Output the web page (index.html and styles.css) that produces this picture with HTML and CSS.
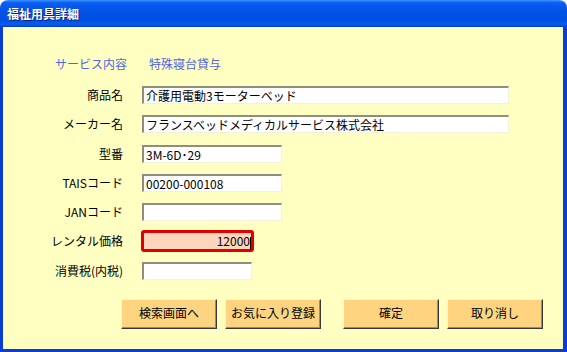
FILE: index.html
```html
<!DOCTYPE html>
<html>
	<head>
		<meta charset="utf-8">
		<title>福祉用具詳細</title>
		<link rel="stylesheet" href="styles.css">
	</head>
	<body>
		<div class="window">
			<div class="title-bar">
				<span class="title">福祉用具詳細</span>
			</div>
			<div class="window-body">
				<div class="service">
					<span class="service-label">サービス内容</span>
					<span class="service-value">特殊寝台貸与</span>
				</div>
				<div class="form">
					<label>商品名</label>
					<div class="field wide">介護用電動3モーターベッド</div>
					<label>メーカー名</label>
					<div class="field wide">フランスベッドメディカルサービス株式会社</div>
					<label>型番</label>
					<div class="field mid">3M-6D･29</div>
					<label>TAISコード</label>
					<div class="field mid">00200-000108</div>
					<label>JANコード</label>
					<div class="field mid"></div>
					<label>レンタル価格</label>
					<div class="field price">12000<span class="caret"></span></div>
					<label>消費税(内税)</label>
					<div class="field short"></div>
				</div>
				<div class="buttons">
					<div class="btn">検索画面へ</div>
					<div class="btn">お気に入り登録</div>
					<div class="btn btn-gap">確定</div>
					<div class="btn">取り消し</div>
				</div>
			</div>
		</div>
	</body>
</html>
```

FILE: styles.css
```css
* {
	margin: 0;
	padding: 0;
	box-sizing: border-box;
}

body {
	background: #fff;
	font-family: "Noto Sans CJK JP", "DejaVu Sans", sans-serif;
	font-size: 12px;
	color: #000;
}

.window {
	width: 567px;
	height: 352px;
	display: flex;
	flex-direction: column;
}

.window .title-bar {
	height: 27px;
	border-radius: 8px 8px 0 0;
	background: linear-gradient(to bottom, #3d95ff 0, #0a5ef0 10%, #0053e6 40%, #0050e0 75%, #0a5cf0 90%, #0040c8 100%);
	padding-left: 7px;
	display: flex;
	align-items: center;
}

.window .title-bar .title {
	color: #fff;
	font-weight: bold;
	font-size: 12px;
	text-shadow: 1px 1px #0a1f80;
}

.window .window-body {
	flex: 1;
	background: #ffffc2;
	border-left: 3px solid #0a3cd6;
	border-right: 4px solid #0a3cd6;
	border-bottom: 3px solid #0a3cd6;
	padding-top: 29px;
}

.service {
	display: flex;
	gap: 22px;
	padding-left: 52px;
	height: 15px;
	line-height: 15px;
	color: #5264e6;
}

.form {
	display: grid;
	grid-template-columns: 120px 1fr;
	column-gap: 19px;
	grid-auto-rows: 18px;
	row-gap: 11.3px;
	margin-top: 15px;
}

.form label {
	text-align: right;
	line-height: 18px;
}

.form .field {
	height: 18px;
	line-height: 15px;
	padding-left: 2px;
	background: #fff;
	border-style: solid;
	border-width: 2px 1px 1px 2px;
	border-color: #8f8d7d #f2f0de #f2f0de #8f8d7d;
	white-space: nowrap;
}

.form .wide {
	width: 367px;
}

.form .mid {
	width: 140px;
}

.form .short {
	width: 110px;
}

.form .price {
	width: 113px;
	height: 22px;
	margin: -2px 0 -2px -1px;
	line-height: 16px;
	background: #fcd5bc;
	border: 3px solid #e00000;
	border-radius: 3px;
	text-align: right;
	padding-right: 0;
}

.form .price .caret {
	display: inline-block;
	width: 1px;
	height: 13px;
	background: #000;
	vertical-align: middle;
}

.buttons {
	display: flex;
	gap: 8px;
	padding-left: 118px;
	margin-top: 19px;
}

.buttons .btn {
	width: 96px;
	height: 30px;
	line-height: 26px;
	text-align: center;
	background: #ffd480;
	border: 1px solid;
	border-color: #fff2cc #3a3a3a #3a3a3a #fff2cc;
	box-shadow: inset -1px -1px #a88c50;
}

.buttons .btn-gap {
	margin-left: 14px;
}
```
